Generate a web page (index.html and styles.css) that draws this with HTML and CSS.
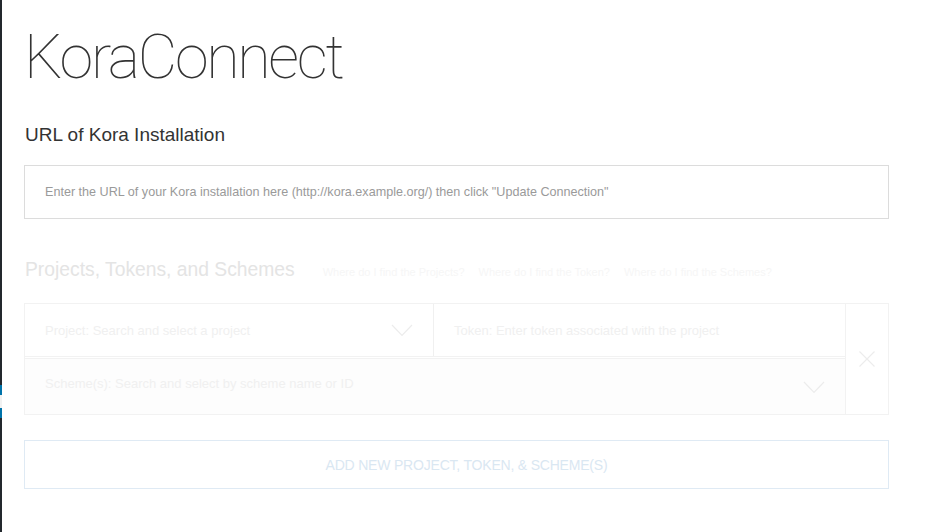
FILE: index.html
```html
<!DOCTYPE html>
<html>
<head>
<meta charset="utf-8">
<link rel="stylesheet" href="styles.css">
</head>
<body>
<div class="page">
  <aside class="adminbar">
    <div class="current"><div class="notch"></div></div>
  </aside>
  <main class="content">
    <h1 class="title">KoraConnect</h1>
    <h2 class="label">URL of Kora Installation</h2>
    <div class="url-input">Enter the URL of your Kora installation here (http://kora.example.org/) then click "Update Connection"</div>

    <div class="section-head">
      <h2 class="label faint">Projects, Tokens, and Schemes</h2>
      <div class="help">
        <span>Where do I find the Projects?</span>
        <span>Where do I find the Token?</span>
        <span>Where do I find the Schemes?</span>
      </div>
    </div>

    <div class="group">
      <div class="fields">
        <div class="row">
          <div class="field select project">
            <span>Project: Search and select a project</span>
            <svg class="chev" width="22" height="13" viewBox="0 0 22 13"><path d="M1 1 L11 11.5 L21 1" fill="none" stroke="#ececec" stroke-width="1.2"/></svg>
          </div>
          <div class="field token"><span>Token: Enter token associated with the project</span></div>
        </div>
        <div class="field select scheme">
          <span>Scheme(s): Search and select by scheme name or ID</span>
          <svg class="chev" width="22" height="13" viewBox="0 0 22 13"><path d="M1 1 L11 11.5 L21 1" fill="none" stroke="#ececec" stroke-width="1.2"/></svg>
        </div>
      </div>
      <div class="remove">
        <svg width="16" height="16" viewBox="0 0 16 16"><path d="M0.5 0.5 L15.5 15.5 M15.5 0.5 L0.5 15.5" fill="none" stroke="#ececec" stroke-width="1.2"/></svg>
      </div>
    </div>

    <div class="add-btn">ADD NEW PROJECT, TOKEN, &amp; SCHEME(S)</div>
  </main>
</div>
</body>
</html>
```

FILE: styles.css
```css
html, body {
  margin: 0;
  padding: 0;
  background: #fff;
  height: 100%;
}
* {
  box-sizing: border-box;
}
body {
  font-family: "Liberation Sans", Arial, sans-serif;
  color: #333;
}
.page {
  display: flex;
  min-height: 532px;
}
.adminbar {
  width: 2px;
  background: #23282d;
  display: flex;
  flex-direction: column;
}
.current {
  margin-top: 385px;
  height: 33px;
  background: #0073aa;
  display: flex;
  flex-direction: column;
  justify-content: center;
}
.notch {
  height: 13px;
  background: #f1f1f1;
}
.content {
  flex: 1;
  padding: 0 45px 0 22px;
}
.title {
  margin: 22px 0 0 0;
  font-family: Roboto, "Liberation Sans", sans-serif;
  font-weight: 100;
  font-size: 61px;
  line-height: 70px;
  color: #333;
  letter-spacing: -2.3px;
}
.label {
  margin: 31px 0 0 1px;
  font-weight: normal;
  font-size: 19px;
  line-height: 24px;
  color: #333;
}
.url-input {
  margin-top: 18px;
  height: 54px;
  border: 1px solid #dcdcdc;
  display: flex;
  align-items: center;
  padding-left: 20px;
  font-size: 12.6px;
  color: #9a9a9a;
}
.section-head {
  margin-top: 39px;
  display: flex;
  align-items: baseline;
}
.section-head .label {
  margin-top: 0;
  font-size: 19.3px;
}
.label.faint {
  color: #e4e4e4;
}
.help {
  margin-left: 28px;
  display: flex;
  gap: 14px;
  font-size: 11px;
  color: #f6f6f6;
}
.group {
  margin-top: 21px;
  display: flex;
  border: 1px solid #f2f2f2;
}
.fields {
  flex: 1;
  display: flex;
  flex-direction: column;
}
.row {
  display: flex;
  border-bottom: 1px solid #f2f2f2;
}
.field {
  display: flex;
  align-items: center;
  padding-left: 20px;
  font-size: 13px;
  color: #f0f0f0;
}
.project {
  width: 409px;
  height: 52px;
  border-right: 1px solid #f0f0f0;
  padding-right: 20px;
  justify-content: space-between;
}
.token {
  flex: 1;
  height: 52px;
}
.scheme {
  margin-top: 1px;
  border-top: 1px solid #f2f2f2;
  height: 56px;
  background: #fdfdfd;
  justify-content: space-between;
  padding-right: 20px;
}
.scheme span {
  position: relative;
  top: -3px;
}
.scheme .chev {
  position: relative;
  top: 1px;
}
.remove {
  width: 43px;
  border-left: 1px solid #f2f2f2;
  display: flex;
  align-items: center;
  justify-content: center;
}
.add-btn {
  margin-top: 25px;
  height: 49px;
  border: 1px solid #dfeaf4;
  display: flex;
  align-items: center;
  justify-content: center;
  padding-left: 20px;
  font-size: 14px;
  color: #dae7f2;
  letter-spacing: -0.2px;
}
```
